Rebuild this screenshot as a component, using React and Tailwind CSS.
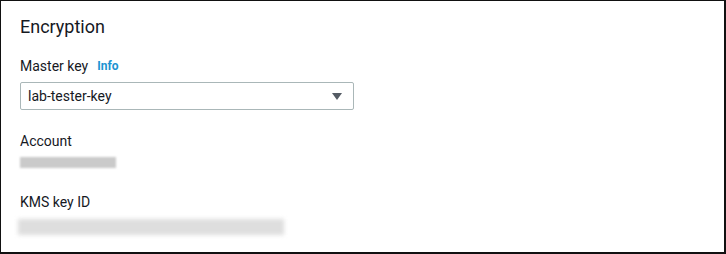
export default function App() {
  return (
    <div className="w-[726px] h-[254px] bg-white border-l border-t border-r-2 border-b-2 border-[#111] box-border" style={{ fontFamily: 'Roboto, "Noto Sans", sans-serif' }}>
      <div className="pl-[19px] pt-[14px] text-[#16191f]">
        <h2 className="text-[18px] leading-[24px] font-normal">Encryption</h2>
        <div className="mt-[17px] flex items-center gap-[9px] text-[14px] leading-[20px]">
          <span>Master key</span>
          <span className="text-[#1b93d1] font-bold text-[12px]">Info</span>
        </div>
        <div className="mt-[6px] w-[334px] h-[28px] border border-[#aab7b8] rounded-[2px] flex items-center justify-between pl-[7px] pr-[11px] text-[14px]">
          <span>lab-tester-key</span>
          <svg width="10" height="7" viewBox="0 0 10 7"><path d="M0 0H10L5 7Z" fill="#545b64" /></svg>
        </div>
        <div className="mt-[21px] text-[14px] leading-[20px]">Account</div>
        <div className="mt-[6px] w-[96px] h-[11px] bg-[#cacaca] blur-[1px]"></div>
        <div className="mt-[24px] text-[14px] leading-[20px]">KMS key ID</div>
        <div className="mt-[7px] -ml-[2px] w-[266px] h-[16px] bg-[#dedede] blur-[2px]"></div>
      </div>
    </div>
  );
}
